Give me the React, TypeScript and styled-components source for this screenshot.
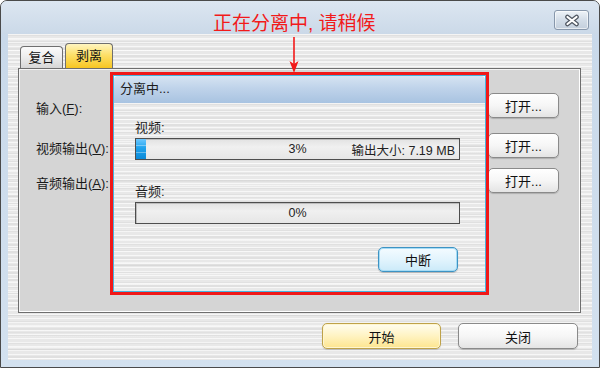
import styled, { createGlobalStyle } from "styled-components";

const GlobalStyle = createGlobalStyle`
  html, body {
    margin: 0;
    padding: 0;
    background: #ffffff;
  }
  body {
    font-family: "Liberation Sans", "Noto Sans CJK SC", sans-serif;
    color: #1e1e1e;
  }
`;

const brushed = `
  background-color: #e8e8e8;
  background-image:
    repeating-linear-gradient(180deg, rgba(255,255,255,0.65) 0 1px, transparent 1px 4px),
    repeating-linear-gradient(180deg, rgba(0,0,0,0.035) 0 2px, transparent 2px 7px),
    repeating-linear-gradient(180deg, transparent 0 5px, rgba(255,255,255,0.5) 5px 6px, transparent 6px 11px),
    repeating-linear-gradient(180deg, transparent 0 9px, rgba(0,0,0,0.03) 9px 10px, transparent 10px 17px);
`;

const Window = styled.div`
  position: relative;
  width: 600px;
  height: 368px;
  box-sizing: border-box;
  border: 1px solid #4a4a4a;
  border-radius: 7px 7px 0 0;
  background: linear-gradient(180deg, #d2dfec 0%, #c9d9ea 10%, #d3e1ef 100%);
  display: flex;
  flex-direction: column;
  overflow: hidden;
`;

const TitleBar = styled.div`
  height: 33px;
  flex: none;
  display: flex;
  justify-content: flex-end;
  align-items: flex-start;
  padding: 9px 10px 0 0;
  box-sizing: border-box;
  background: linear-gradient(180deg, #dce6f1 0%, #cbd9e8 100%);
`;

const CloseButton = styled.div`
  width: 35px;
  height: 20px;
  box-sizing: border-box;
  border: 1px solid #8797ab;
  border-radius: 3px;
  background: linear-gradient(180deg, #eef3f8 0%, #d3dde8 50%, #c3cfdc 100%);
  box-shadow: inset 0 0 0 1px rgba(255, 255, 255, 0.6);
  display: flex;
  align-items: center;
  justify-content: center;
`;

const Client = styled.div`
  flex: 1;
  margin: 0 7px 7px 7px;
  padding: 9px 11px 0 10px;
  display: flex;
  flex-direction: column;
  ${brushed}
`;

const TabStrip = styled.div`
  height: 25px;
  display: flex;
  align-items: flex-end;
  gap: 2px;
  padding-left: 2px;
`;

const Tab = styled.div<{ active?: boolean }>`
  box-sizing: border-box;
  width: ${({ active }) => (active ? "48px" : "43px")};
  height: ${({ active }) => (active ? "25px" : "22px")};
  border: 1px solid #6f6f6f;
  border-bottom: none;
  border-radius: 4px 4px 0 0;
  background: ${({ active }) =>
    active
      ? "linear-gradient(180deg, #fff5c0 0%, #fde06a 45%, #f7c622 100%)"
      : "linear-gradient(180deg, #fbfbfb 0%, #ececec 50%, #d6d6d6 100%)"};
  font-size: 13px;
  line-height: ${({ active }) => (active ? "23px" : "21px")};
  text-align: center;
  color: #111;
`;

const Panel = styled.div`
  position: relative;
  height: 245px;
  box-sizing: border-box;
  border: 1px solid #6e6e6e;
  background: #d5d5d5;
  box-shadow: inset 1px 1px 0 #f4f4f4, inset -1px -1px 0 #ffffff;
  padding: 24px 21px 0 17px;
`;

const FieldRow = styled.div<{ gapAbove: number }>`
  display: flex;
  align-items: center;
  justify-content: space-between;
  margin-top: ${({ gapAbove }) => gapAbove}px;
  height: 25px;
`;

const FieldLabel = styled.span`
  font-size: 13px;
  line-height: 16px;
  padding-top: 6px;
  color: #1a1a1a;
`;

const Key = styled.span`
  text-decoration: underline;
`;

const PushButton = styled.div<{ width: number; height: number }>`
  box-sizing: border-box;
  width: ${({ width }) => width}px;
  height: ${({ height }) => height}px;
  border: 1px solid #8a8a8a;
  border-radius: 5px;
  background: linear-gradient(180deg, #ffffff 0%, #f6f6f6 50%, #e4e4e4 100%);
  box-shadow: 0 1px 1px rgba(0, 0, 0, 0.18);
  font-size: 13px;
  display: flex;
  align-items: center;
  justify-content: center;
  color: #111;
`;

const DefaultButton = styled(PushButton)`
  border-color: #bea24a;
  background: linear-gradient(180deg, #fffdf0 0%, #fff3c2 50%, #fde58e 100%);
  box-shadow: inset 0 0 0 1px #fff6cf, 0 1px 1px rgba(0, 0, 0, 0.15);
`;

const FocusButton = styled(PushButton)`
  border-color: #3d93c4;
  background: linear-gradient(180deg, #f4fbff 0%, #e2f4fd 50%, #cbeaf9 100%);
  box-shadow: inset 0 0 0 1px #a6dcf5, 0 1px 1px rgba(0, 0, 0, 0.2);
`;

const Footer = styled.div`
  display: flex;
  justify-content: flex-end;
  gap: 17px;
  margin-top: 10px;
  padding-right: 3px;
`;

/* progress dialog lying over the panel, ringed in red */
const Highlight = styled.div`
  position: absolute;
  left: 91px;
  top: 3px;
  width: 379px;
  height: 223px;
  box-sizing: border-box;
  border: 3px solid #f01818;
  display: flex;
`;

const Dialog = styled.div`
  flex: 1;
  display: flex;
  flex-direction: column;
  border: 1px solid #48b4de;
  box-shadow: inset 0 0 0 1px #ffffff;
`;

const DialogTitle = styled.div`
  height: 27px;
  flex: none;
  padding-left: 6px;
  font-size: 13px;
  line-height: 26px;
  color: #1c1c1c;
  background: linear-gradient(180deg, #d6e4f2 0%, #bfd3ea 45%, #a8c3e1 100%);
  border-radius: 4px 4px 0 0;
`;

const DialogBody = styled.div`
  flex: 1;
  display: flex;
  flex-direction: column;
  padding: 17px 25px 0 21px;
  ${brushed}
`;

const BarLabel = styled.div<{ gapAbove?: number }>`
  font-size: 13px;
  line-height: 16px;
  margin-top: ${({ gapAbove }) => gapAbove ?? 0}px;
  margin-bottom: 2px;
`;

const Bar = styled.div`
  position: relative;
  height: 22px;
  box-sizing: border-box;
  border: 1px solid #4e4e4e;
  background: linear-gradient(180deg, #e2e2e2 0%, #f0f0f0 40%, #e6e6e6 100%);
  box-shadow: inset 1px 1px 0 #bdbdbd;
  display: flex;
  align-items: center;
  justify-content: center;
  font-size: 12.5px;
  color: #222;
`;

const BarFill = styled.div`
  position: absolute;
  left: 0;
  top: 0;
  bottom: 0;
  background-image:
    repeating-linear-gradient(180deg, transparent 0 6px, rgba(255,255,255,0.35) 6px 7px),
    linear-gradient(180deg, #6cc8ff 0%, #1fa2ec 45%, #0b8ad8 100%);
`;

const BarSize = styled.span`
  position: absolute;
  right: 4px;
`;

const DialogActions = styled.div`
  display: flex;
  justify-content: flex-end;
  margin-top: 23px;
  padding-right: 2px;
`;

const Annotation = styled.div`
  position: absolute;
  left: 212px;
  top: 11px;
  display: flex;
  flex-direction: column;
  align-items: center;
  color: #f21a1a;
  font-size: 19px;
  line-height: 24px;
  pointer-events: none;
`;

const CloseGlyph = () => (
  <svg width="18" height="13" viewBox="0 0 18 13">
    <path d="M4.5 3 L13.5 10 M13.5 3 L4.5 10" stroke="#4f5762" strokeWidth="4.6" strokeLinecap="round" />
    <path d="M4.5 3 L13.5 10 M13.5 3 L4.5 10" stroke="#ffffff" strokeWidth="2.2" strokeLinecap="round" />
  </svg>
);

const DownArrow = () => (
  <svg width="12" height="37" viewBox="0 0 12 37">
    <line x1="6" y1="1" x2="6" y2="30" stroke="#f21a1a" strokeWidth="1.6" />
    <path d="M1.5 25 L6 37 L10.5 25 L6 28 Z" fill="#f21a1a" />
  </svg>
);

const fields = [
  { name: "输入", key: "F", gap: 0 },
  { name: "视频输出", key: "V", gap: 15 },
  { name: "音频输出", key: "A", gap: 10 },
];

export default function App() {
  const videoProgress = 3;
  const audioProgress = 0;

  return (
    <>
      <GlobalStyle />
      <Window>
        <TitleBar>
          <CloseButton>
            <CloseGlyph />
          </CloseButton>
        </TitleBar>
        <Client>
          <TabStrip>
            <Tab>复合</Tab>
            <Tab active>剥离</Tab>
          </TabStrip>
          <Panel>
            {fields.map((f) => (
              <FieldRow key={f.key} gapAbove={f.gap}>
                <FieldLabel>
                  {f.name}(<Key>{f.key}</Key>):
                </FieldLabel>
                <PushButton width={71} height={25}>
                  打开...
                </PushButton>
              </FieldRow>
            ))}

            <Highlight>
              <Dialog>
                <DialogTitle>分离中...</DialogTitle>
                <DialogBody>
                  <BarLabel>视频:</BarLabel>
                  <Bar>
                    <BarFill style={{ width: `${videoProgress}%` }} />
                    {videoProgress}%
                    <BarSize>输出大小: 7.19 MB</BarSize>
                  </Bar>
                  <BarLabel gapAbove={24}>音频:</BarLabel>
                  <Bar>{audioProgress}%</Bar>
                  <DialogActions>
                    <FocusButton width={80} height={25}>
                      中断
                    </FocusButton>
                  </DialogActions>
                </DialogBody>
              </Dialog>
            </Highlight>
          </Panel>
          <Footer>
            <DefaultButton width={119} height={26}>
              开始
            </DefaultButton>
            <PushButton width={120} height={26}>
              关闭
            </PushButton>
          </Footer>
        </Client>
        <Annotation>
          <span>正在分离中, 请稍候</span>
          <DownArrow />
        </Annotation>
      </Window>
    </>
  );
}
